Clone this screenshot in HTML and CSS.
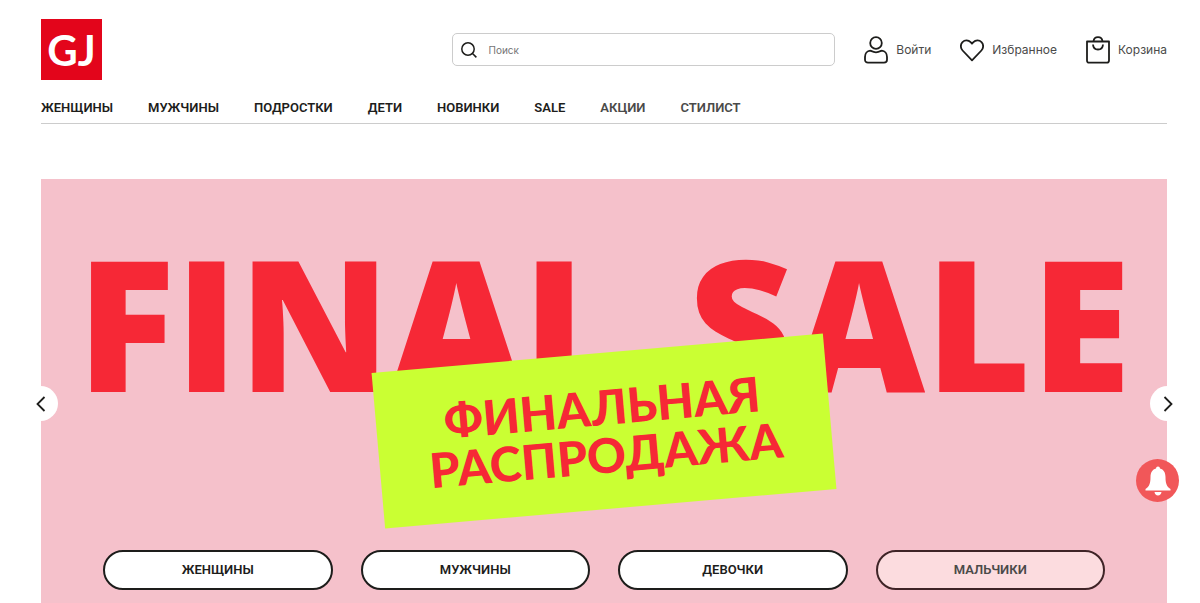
FILE: index.html
```
<!DOCTYPE html>
<html lang="ru">
<head>
    <meta charset="UTF-8">
    <meta name="viewport" content="width=device-width, initial-scale=1.0">
    <title>GJ</title>
    <link rel="stylesheet" href="styles.css">
</head>
<body>

    <div class="container">
        <header class="header">
            <a href="#" class="logo">GJ</a>
            <form class="search">
                <svg class="search-icon" viewBox="0 0 16 16" aria-hidden="true">
                    <circle cx="7" cy="7" r="6.2"/>
                    <path d="M11.5 11.5L15.4 15.4"/>
                </svg>
                <input type="text" class="search-input" placeholder="Поиск" aria-label="Поиск">
            </form>
            <div class="user-links">
                <a href="#" class="user-link">
                    <svg class="icon" viewBox="0 0 24 28" aria-hidden="true">
                        <circle cx="12" cy="7" r="5.8"/>
                        <path d="M6.2 14.6C8 15.4 9.6 16.3 12 16.3s4-.9 5.8-1.7C20.8 14.8 23 17.5 23 21v2.8c0 1.9-1.2 2.9-3 2.9H4c-1.800 0-3-1-3-2.900V21c0-3.500 2.200-6.200 5.200-6.400z"/>
                    </svg>
                    <span>Войти</span>
                </a>
                <a href="#" class="user-link">
                    <svg class="icon" viewBox="0 0 24 28" aria-hidden="true">
                        <path d="M12 24.3L2.600 14.500C.3 12 .3 8.300 2.500 6.100c2.300-2.300 5.900-2.200 8.100.1L12 7.700l1.400-1.500c2.200-2.300 5.800-2.400 8.100-.1 2.200 2.200 2.200 5.900-.1 8.400z"/>
                    </svg>
                    <span>Избранное</span>
                </a>
                <a href="#" class="user-link">
                    <svg class="icon" viewBox="0 0 24 28" aria-hidden="true">
                        <path d="M1 5.500h22v19c0 1.400-.8 2.200-2.200 2.200H3.200C1.800 26.700 1 25.900 1 24.500z"/>
                        <path d="M7.500 5.500c.3-2.800 2-4.300 4.500-4.300s4.200 1.500 4.500 4.300M7 8.500c.2 3.200 2.200 5 5 5s4.800-1.800 5-5"/>
                    </svg>
                    <span>Корзина</span>
                </a>
            </div>
        </header>

        <nav class="menu">
            <a href="#">ЖЕНЩИНЫ</a>
            <a href="#">МУЖЧИНЫ</a>
            <a href="#">ПОДРОСТКИ</a>
            <a href="#">ДЕТИ</a>
            <a href="#">НОВИНКИ</a>
            <a href="#">SALE</a>
            <a href="#" class="muted">АКЦИИ</a>
            <a href="#" class="muted">СТИЛИСТ</a>
        </nav>

        <section class="banner">
            <h1 class="banner-title"><span>FINAL</span> <span>SALE</span></h1>
            <p class="sticker">ФИНАЛЬНАЯ<br>РАСПРОДАЖА</p>
            <button class="arrow arrow-prev" aria-label="Назад">
                <svg viewBox="0 0 10 16" aria-hidden="true"><path d="M8.500 1L1.500 8l7 7"/></svg>
            </button>
            <button class="arrow arrow-next" aria-label="Вперёд">
                <svg viewBox="0 0 10 16" aria-hidden="true"><path d="M1.500 1l7 7-7 7"/></svg>
            </button>
            <div class="banner-buttons">
                <a href="#" class="btn">ЖЕНЩИНЫ</a>
                <a href="#" class="btn">МУЖЧИНЫ</a>
                <a href="#" class="btn">ДЕВОЧКИ</a>
                <a href="#" class="btn btn-faded">МАЛЬЧИКИ</a>
            </div>
        </section>
    </div>

    <button class="bell" aria-label="Уведомления">
        <svg viewBox="0 0 26 30" aria-hidden="true">
            <path d="M13 .5c1.200 0 1.900.8 2 2 3.600 1 5.500 4 5.500 8.500 0 6 1 9.500 5 12v1.500H.5V23c4-2.500 5-6 5-12C5.500 6.500 7.400 3.500 11 2.500c.1-1.200.8-2 2-2zM9.500 26h7c-.3 2-1.500 3.500-3.500 3.500S9.800 28 9.500 26z"/>
        </svg>
    </button>

</body>
</html>
```
FILE: styles.css
```
* {
    margin: 0;
    padding: 0;
    box-sizing: border-box;
}

body {
    font-family: Inter, "Liberation Sans", sans-serif;
    background-color: #fff;
    color: #1d1d1b;
}

a {
    color: inherit;
    text-decoration: none;
}

button {
    border: none;
    cursor: pointer;
}

svg {
    display: block;
}

.container {
    padding: 19px 33px 0 41px;
}

/* Header */
.header {
    display: flex;
    align-items: center;
}

.logo {
    display: flex;
    align-items: center;
    justify-content: center;
    width: 61px;
    height: 61px;
    margin-right: auto;
    background-color: #e3051b;
    color: #fff;
    font-family: Lato, sans-serif;
    font-size: 42px;
    font-weight: 700;
}

.search {
    display: flex;
    align-items: center;
    gap: 11px;
    width: 34%;
    height: 33px;
    padding: 0 8px;
    border: 1px solid #ccc;
    border-radius: 5px;
}

.search-icon {
    width: 16px;
    height: 16px;
    flex: none;
    fill: none;
    stroke: #1d1d1b;
    stroke-width: 1.5;
}

.search-input {
    flex: 1;
    min-width: 0;
    border: none;
    outline: none;
    background: none;
    font-family: inherit;
    font-size: 10px;
}

.search-input::placeholder {
    color: #757575;
}

.user-links {
    display: flex;
    gap: 29px;
    margin-left: 29px;
}

.user-link {
    display: flex;
    align-items: center;
    gap: 8px;
    font-size: 12px;
    color: #4a4a49;
}

.icon {
    width: 24px;
    height: 28px;
    fill: none;
    stroke: #1d1d1b;
    stroke-width: 1.8;
    stroke-linejoin: round;
}

/* Menu */
.menu {
    display: flex;
    gap: 35px;
    padding: 19px 0 6px;
    border-bottom: 1px solid #ccc;
    font-family: Roboto, sans-serif;
    font-size: 13px;
    font-weight: 600;
    line-height: 18px;
}

.muted {
    color: #4a4a49;
}

/* Banner */
.banner {
    position: relative;
    margin-top: 55px;
    padding: 52px 62px 13px;
    background-color: #f5c1cb;
}

.banner-title {
    display: flex;
    justify-content: space-between;
    margin: 0 -26px;
    font-family: "Open Sans", sans-serif;
    font-size: 182px;
    font-weight: 800;
    line-height: 180px;
    color: #f62836;
}

.sticker {
    position: absolute;
    top: 174px;
    left: 50%;
    width: 453px;
    padding: 30px 0;
    transform: translateX(-50%) rotate(-5deg);
    background-color: #caff33;
    color: #f62836;
    font-family: Lato, sans-serif;
    font-size: 48px;
    font-weight: 900;
    line-height: 48px;
    text-align: center;
}

.banner-buttons {
    display: grid;
    grid-template-columns: repeat(4, 1fr);
    gap: 28px;
    margin-top: 139px;
}

.btn {
    padding: 10px;
    border: 2px solid #1d1d1b;
    border-radius: 20px;
    background-color: #fff;
    font-family: Roboto, sans-serif;
    font-size: 13px;
    font-weight: 600;
    line-height: 16px;
    text-align: center;
}

.btn-faded {
    border-color: #3f2427;
    background-color: #fcdcdf;
    color: #4a4a49;
}

.arrow {
    position: absolute;
    top: 207px;
    display: flex;
    align-items: center;
    justify-content: center;
    width: 35px;
    height: 35px;
    border-radius: 50%;
    background-color: #fff;
}

.arrow svg {
    width: 10px;
    height: 16px;
    fill: none;
    stroke: #1d1d1b;
    stroke-width: 1.8;
}

.arrow-prev {
    left: -18px;
}

.arrow-next {
    right: -18px;
}

.bell {
    position: fixed;
    right: 21px;
    bottom: 101px;
    display: flex;
    align-items: center;
    justify-content: center;
    width: 43px;
    height: 43px;
    border-radius: 50%;
    background-color: #f15759;
}

.bell svg {
    width: 26px;
    height: 30px;
    fill: #fff;
}
```
